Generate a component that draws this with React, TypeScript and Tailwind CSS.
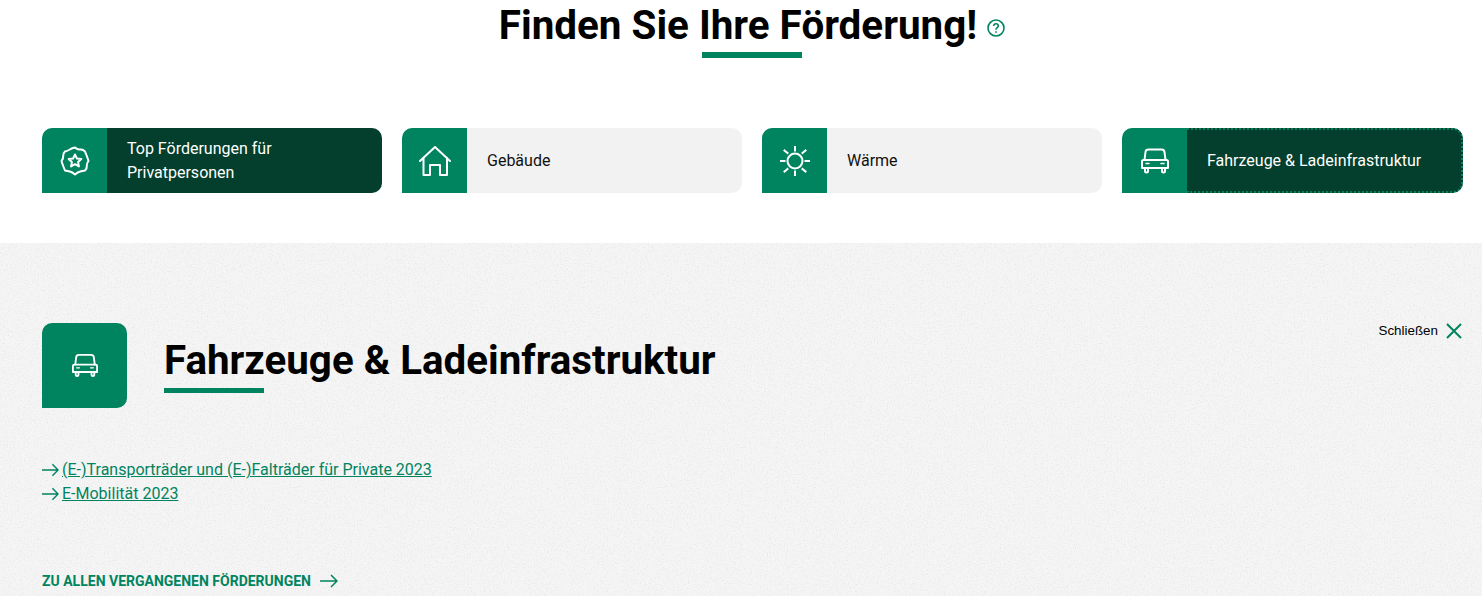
import React from "react";

const Arrow = ({ className }: { className?: string }) => (
  <svg viewBox="0 0 18 14" fill="none" stroke="currentColor" strokeWidth="1.5" className={className}>
    <path d="M0 7h17M11 1l6 6-6 6" />
  </svg>
);

const CarIcon = ({ className }: { className?: string }) => (
  <svg viewBox="0 0 28 26" fill="none" stroke="currentColor" strokeWidth="2" strokeLinejoin="round" strokeLinecap="round" className={className}>
    <path d="M3.500 12 4.500 4Q4.800 1.500 7.500 1.500h13q2.700 0 3 2.500l1 8" />
    <path d="M2.500 12h23q1.500 0 1.500 1.500V20H1v-6.500Q1 12 2.500 12z" />
    <path d="M4 20v3q0 1.500 1.500 1.500T7 23v-3M21 20v3q0 1.500 1.500 1.500T24 23v-3" />
    <path d="M5 15.500h3M20 15.500h3" strokeWidth="1.500" />
  </svg>
);

const BadgeIcon = () => (
  <svg viewBox="0 0 30 30" fill="none" stroke="currentColor" strokeWidth="2" strokeLinejoin="round" className="w-[30px] h-[30px]">
    <path d="M15 1.500Q17.800 4 20.200 3.500T25 5.500q1 2.500 1.800 4.500T28.500 15q-2 2.500-1.700 5T25 24.500q-2.500.5-4.800 1T15 28.500q-2.800-2.500-5.200-3T5 24.500q-1-2.500-1.800-4.500T1.500 15q2-2.500 1.700-5T5 5.500q2.500-.5 4.800-2T15 1.500Z" />
    <path d="M15 8.500l1.900 4 4.400.5-3.200 3 .8 4.400-3.900-2.200-3.900 2.200.8-4.400-3.200-3 4.400-.5z" />
  </svg>
);

const HomeIcon = () => (
  <svg viewBox="0 0 32 30" fill="none" stroke="currentColor" strokeWidth="2" strokeLinejoin="round" strokeLinecap="round" className="w-[32px] h-[30px]">
    <path d="M1 15 16 1l15 14" />
    <path d="M4.500 12V29H11V19h10v10h7V12" />
  </svg>
);

const SunIcon = () => (
  <svg viewBox="0 0 30 30" fill="none" stroke="currentColor" strokeWidth="2" strokeLinecap="square" className="w-[30px] h-[30px]">
    <circle cx="15" cy="15" r="7.500" />
    <path d="M15 1v3.500M15 25.500V29M1 15h3.500M25.500 15H29M4.500 4.500l3 2.500M25.500 4.500l-3 2.500M4.500 25.500l3-2.500M25.500 25.500l-3-2.500" />
  </svg>
);

const cards = [
  { label: "Top Förderungen für Privatpersonen", icon: <BadgeIcon />, active: true },
  { label: "Gebäude", icon: <HomeIcon />, active: false },
  { label: "Wärme", icon: <SunIcon />, active: false },
  { label: "Fahrzeuge & Ladeinfrastruktur", icon: <CarIcon className="w-[28px] h-[26px]" />, active: true, focused: true },
];

const links = ["(E-)Transporträder und (E-)Falträder für Private 2023", "E-Mobilität 2023"];

export default function App() {
  return (
    <div className="w-[1482px] h-[596px] overflow-hidden bg-white text-black font-['Roboto',sans-serif]">
      {/* Header + cards */}
      <div className="h-[243px] pl-[42px] pr-[20px]">
        <div className="flex justify-center items-center gap-[10px] h-[52px]">
          <h1 className="text-[40.4px] leading-[50px] font-bold">Finden Sie Ihre Förderung!</h1>
          <svg viewBox="0 0 18 18" fill="none" stroke="#00845f" strokeWidth="1.600" className="w-[18px] h-[18px] mt-[3px]">
            <circle cx="9" cy="9" r="8" />
            <path d="M6.700 7q.2-2.200 2.300-2.200t2.300 2q0 1.200-1.200 1.900Q9 9.400 9 10.800" />
            <path d="M9 12.300v1.400" />
          </svg>
        </div>
        <div className="w-[100px] h-[6px] bg-[#00845f] mx-auto" />

        <div className="grid grid-cols-4 gap-5 mt-[70px]">
          {cards.map((c) => (
            <div key={c.label} className="flex h-[65px]">
              <div className="w-[65px] shrink-0 bg-[#00845f] text-white flex items-center justify-center rounded-tl-[10px]">{c.icon}</div>
              <div
                className={
                  "flex-1 flex items-center pl-5 pr-10 text-[16px] leading-[24px] rounded-r-[10px] " +
                  (c.active ? "bg-[#033f2c] text-white " : "bg-[#f2f2f2] text-[#111] ") +
                  (c.focused ? "border-2 border-l-0 border-dotted border-[#00845f] whitespace-nowrap" : "")
                }
              >
                {c.label}
              </div>
            </div>
          ))}
        </div>
      </div>

      {/* Detail panel */}
      <div className="relative h-[353px] bg-[#f5f5f5]">
        <svg aria-hidden="true" className="absolute inset-0 w-full h-full">
          <filter id="grain">
            <feTurbulence type="fractalNoise" baseFrequency="0.7" numOctaves="2" seed="4" />
            <feColorMatrix values="0 0 0 0 0.5  0 0 0 0 0.5  0 0 0 0 0.5  3 0 0 0 -1.450" />
          </filter>
          <rect width="100%" height="100%" filter="url(#grain)" opacity="0.2" />
        </svg>

        <div className="relative h-full pl-[42px] pr-[20px] pt-[80px]">
          <button className="absolute top-[78px] right-[20px] flex items-center gap-2 text-[13.4px] leading-5 font-['Liberation_Sans',sans-serif]">
            Schließen
            <svg viewBox="0 0 16 16" fill="none" stroke="#00845f" strokeWidth="2" className="w-4 h-4">
              <path d="M1 1l14 14M15 1 1 15" />
            </svg>
          </button>

          <div className="flex">
            <div className="w-[85px] h-[85px] rounded-[10px] rounded-bl-none bg-[#00845f] text-white flex items-center justify-center">
              <CarIcon className="w-[26px] h-[25px]" />
            </div>
            <div className="ml-[37px]">
              <h2 className="text-[40.3px] leading-[50px] font-bold mt-[13px]">Fahrzeuge & Ladeinfrastruktur</h2>
              <div className="w-[100px] h-[5px] bg-[#00845f] mt-[2px]" />
            </div>
          </div>

          <ul className="mt-[50px] text-[16px] leading-[24px] text-[#00845f]">
            {links.map((l) => (
              <li key={l} className="flex items-center gap-[3px]">
                <Arrow className="w-[17px] h-[14px]" />
                <a className="underline">{l}</a>
              </li>
            ))}
          </ul>

          <div className="mt-[65px] flex items-center gap-[9px] text-[14px] leading-5 font-bold text-[#00845f]">
            ZU ALLEN VERGANGENEN FÖRDERUNGEN
            <Arrow className="w-[18px] h-[14px]" />
          </div>
        </div>
      </div>
    </div>
  );
}
